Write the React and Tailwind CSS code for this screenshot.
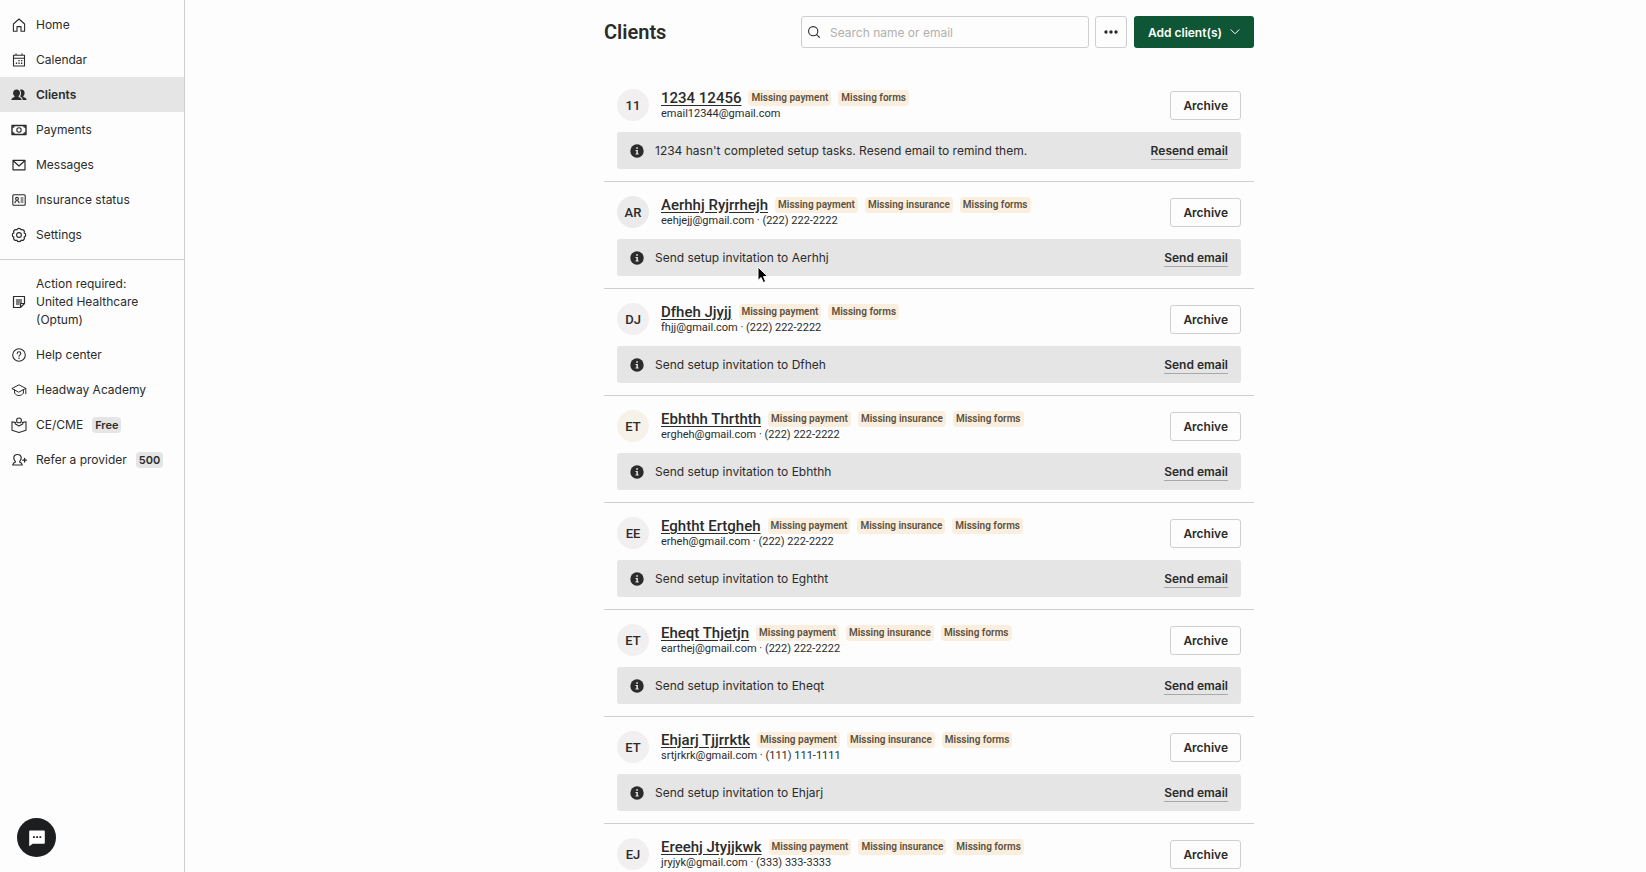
import React, { useState } from 'react';

const line = { fill: 'none', stroke: 'currentColor', strokeWidth: 1.1, strokeLinejoin: 'round', strokeLinecap: 'round' };

const icons = {
    home: <path {...line} d="M2.4 7 8 2l5.600 5v7.200H10V9.600H6v4.600H2.400z" />,
    calendar: (
        <>
            <path {...line} d="M2.500 3.200h11v10.800h-11zM2.500 6.200h11M5 1.800v1.400M11 1.800v1.400" />
            <path fill="currentColor" d="M7.400 8h1.300v1.300H7.400zM10 8h1.300v1.300H10zM4.800 10.600h1.300v1.300H4.800zM7.400 10.600h1.300v1.300H7.400zM10 10.600h1.300v1.300H10z" />
        </>
    ),
    clients: (
        <>
            <path fill="currentColor" d="M5.600 2.600c2 0 3.400 1.400 3.400 3.300 0 1.300-.6 2.500-1.400 3.200v.8c1.700.5 2.900 1.300 3.100 3.100H.3c.2-1.800 1.500-2.600 3.200-3.100v-.8C2.700 8.400 2.100 7.200 2.100 5.900c0-1.900 1.500-3.300 3.500-3.300z" />
            <path fill="currentColor" d="M9 2.900c.4-.2.900-.3 1.400-.3 1.900 0 3.200 1.400 3.200 3.300 0 1.300-.5 2.500-1.300 3.200v.8c1.900.5 3.200 1.300 3.400 3.100h-4c-.1-1.700-1-2.800-2.600-3.500.6-.8 1-2 1-3.400C10.100 4.900 9.700 3.800 9 2.900z" />
        </>
    ),
    payments: (
        <>
            <path {...line} strokeWidth="1.4" d="M1 3.500h14v9H1z" />
            <circle {...line} cx="8" cy="8" r="2.200" />
            <path fill="currentColor" opacity=".8" d="M1 3.500h3A3 3 0 0 1 1 6.300zM15 3.500h-3A3 3 0 0 0 15 6.300zM1 12.500h3A3 3 0 0 0 1 9.700zM15 12.500h-3A3 3 0 0 1 15 9.700z" />
        </>
    ),
    messages: <path {...line} strokeWidth="1.2" d="M2 3.400h12v9.400H2zM2.200 3.800 8 9l5.800-5.200" />,
    insurance: (
        <>
            <rect {...line} x="1.800" y="2.800" width="12.400" height="10.400" rx="1" />
            <circle {...line} cx="6" cy="6.800" r="1.400" />
            <path {...line} d="M4 10.800c0-1.300.7-2 2-2s2 .7 2 2M10 6h2M10 8h2M10 10h2" />
        </>
    ),
    settings: (
        <>
            <path {...line} strokeWidth="1.200" d="M13.200 5.850A2.300 2.300 0 0 1 13.200 10.150 2.300 2.300 0 0 1 10.150 13.200 2.300 2.300 0 0 1 5.850 13.200 2.300 2.300 0 0 1 2.800 10.150 2.300 2.300 0 0 1 2.800 5.850 2.300 2.300 0 0 1 5.850 2.800 2.300 2.300 0 0 1 10.150 2.800 2.300 2.300 0 0 1 13.200 5.850z" />
            <circle {...line} cx="8" cy="8" r="2.400" />
        </>
    ),
    note: (
        <>
            <path {...line} strokeWidth="1.2" d="M2.500 2.500h11V9.500l-4 4h-7zM13.500 9.500h-4v4" />
            <path fill="currentColor" opacity=".6" d="M5 5h6v4H8.600v2H5z" />
        </>
    ),
    help: (
        <>
            <circle {...line} cx="8" cy="8" r="6.300" />
            <path {...line} d="M6.200 6.600c0-1.100.8-1.800 1.800-1.800s1.800.7 1.800 1.700c0 1.300-1.800 1.400-1.800 2.800" />
            <circle cx="8" cy="11.200" r=".75" fill="currentColor" />
        </>
    ),
    academy: (
        <>
            <path {...line} strokeWidth="1" d="M1.200 6.400 8 2.800l6.800 3.600L8 10z" />
            <path {...line} strokeWidth="1" d="M3.600 7.800v3.400C4.600 12.700 6.200 13.500 8 13.500s3.400-.8 4.400-2.300V7.800M14.800 6.400v5.400" />
        </>
    ),
    reader: (
        <>
            <circle {...line} cx="8" cy="3.400" r="2.400" />
            <path {...line} d="M4.800 5.600 1 4.800v8.400l7 2.200 7-2.200V4.800l-3.800.8M4 6.800 8 9l4-2.200" />
        </>
    ),
    refer: (
        <>
            <path {...line} strokeWidth="1.200" d="M6.500 2.500c2.200 0 3.700 1.500 3.700 3.600 0 1.300-.6 2.500-1.500 3.300v.8c1.400.4 2.300 1.200 2.600 2.800H1.700c.3-1.600 1.200-2.400 2.600-2.800v-.8C3.400 8.600 2.800 7.400 2.800 6.100c0-2.100 1.500-3.600 3.700-3.600z" />
            <path {...line} strokeWidth="1.300" d="M11.800 8.200h3.600M13.600 6.400V10" />
        </>
    ),
};

function Icon({ name }) {
    return (
        <svg viewBox="0 0 16 16" className="size-4 shrink-0" aria-hidden="true">
            {icons[name]}
        </svg>
    );
}

const mainNav = [
    { icon: 'home', label: 'Home' },
    { icon: 'calendar', label: 'Calendar' },
    { icon: 'clients', label: 'Clients', active: true },
    { icon: 'payments', label: 'Payments' },
    { icon: 'messages', label: 'Messages' },
    { icon: 'insurance', label: 'Insurance status' },
    { icon: 'settings', label: 'Settings' },
];

const secondaryNav = [
    { icon: 'note', label: 'Action required: United Healthcare (Optum)' },
    { icon: 'help', label: 'Help center' },
    { icon: 'academy', label: 'Headway Academy' },
    { icon: 'reader', label: 'CE/CME', badge: 'Free' },
    { icon: 'refer', label: 'Refer a provider', badge: '500' },
];

const PAYMENT = 'Missing payment';
const INSURANCE = 'Missing insurance';
const FORMS = 'Missing forms';

const clients = [
    { initials: '11', name: '1234 12456', contact: 'email12344@gmail.com', tags: [PAYMENT, FORMS], note: "1234 hasn't completed setup tasks. Resend email to remind them.", action: 'Resend email' },
    { initials: 'AR', name: 'Aerhhj Ryjrrhejh', contact: 'eehjejj@gmail.com · (222) 222-2222', tags: [PAYMENT, INSURANCE, FORMS], note: 'Send setup invitation to Aerhhj', action: 'Send email', avatar: 'bg-[#ebebeb]' },
    { initials: 'DJ', name: 'Dfheh Jjyjj', contact: 'fhjj@gmail.com · (222) 222-2222', tags: [PAYMENT, FORMS], note: 'Send setup invitation to Dfheh', action: 'Send email' },
    { initials: 'ET', name: 'Ebhthh Thrthth', contact: 'ergheh@gmail.com · (222) 222-2222', tags: [PAYMENT, INSURANCE, FORMS], note: 'Send setup invitation to Ebhthh', action: 'Send email', avatar: 'bg-[#f6f2e9]' },
    { initials: 'EE', name: 'Eghtht Ertgheh', contact: 'erheh@gmail.com · (222) 222-2222', tags: [PAYMENT, INSURANCE, FORMS], note: 'Send setup invitation to Eghtht', action: 'Send email' },
    { initials: 'ET', name: 'Eheqt Thjetjn', contact: 'earthej@gmail.com · (222) 222-2222', tags: [PAYMENT, INSURANCE, FORMS], note: 'Send setup invitation to Eheqt', action: 'Send email' },
    { initials: 'ET', name: 'Ehjarj Tjjrrktk', contact: 'srtjrkrk@gmail.com · (111) 111-1111', tags: [PAYMENT, INSURANCE, FORMS], note: 'Send setup invitation to Ehjarj', action: 'Send email' },
    { initials: 'EJ', name: 'Ereehj Jtyjjkwk', contact: 'jryjyk@gmail.com · (333) 333-3333', tags: [PAYMENT, INSURANCE, FORMS] },
];

function NavItem({ item }) {
    return (
        <a
            href="#"
            aria-current={item.active ? 'page' : undefined}
            className={`flex min-h-[35px] items-center gap-[9px] py-2 pl-[11px] pr-4 leading-[18px] ${item.active ? 'bg-[#e5e5e5] font-semibold' : ''}`}
        >
            <Icon name={item.icon} />
            <span className="max-w-[116px]">{item.label}</span>
            {item.badge && (
                <span className="rounded-sm bg-[#e5e5e5] px-[3px] text-[11px] leading-4 font-semibold">{item.badge}</span>
            )}
        </a>
    );
}

function Sidebar() {
    return (
        <aside className="w-[185px] shrink-0 border-r border-[#cfcfcf]">
            <nav>
                <div className="border-b border-[#cfcfcf] py-[7px]">
                    {mainNav.map((item) => <NavItem key={item.label} item={item} />)}
                </div>
                <div className="pt-[7px]">
                    {secondaryNav.map((item) => <NavItem key={item.label} item={item} />)}
                </div>
            </nav>
        </aside>
    );
}

function ClientRow({ client }) {
    return (
        <li className="border-b border-[#cfcfcf] px-[13px] pt-[14px] pb-3">
            <div className="flex items-center">
                <span className={`flex size-8 shrink-0 items-center justify-center rounded-full text-[13px] font-[Roboto,sans-serif] font-medium ${client.avatar || 'bg-[#f1eff0]'}`}>
                    {client.initials}
                </span>
                <div className="ml-3 min-w-0 grow font-[Roboto,sans-serif]">
                    <div className="flex items-center gap-[7px]">
                        <a href="#" className="text-[15px] leading-[18px] font-medium underline underline-offset-2">{client.name}</a>
                        {client.tags.map((tag) => (
                            <span key={tag} className="rounded-sm bg-[#faefdf] px-[3px] text-[10px] leading-4 font-semibold text-[#5c5140]">{tag}</span>
                        ))}
                    </div>
                    <p className="text-[11px] leading-[14px]">{client.contact}</p>
                </div>
                <button type="button" className="h-[29px] shrink-0 rounded-[3px] border border-[#cfcfcf] px-3 font-semibold">
                    Archive
                </button>
            </div>
            {client.note && (
                <div className="mt-[11px] flex h-[37px] items-center rounded-[3px] bg-[#e5e5e5] px-[13px]">
                    <svg viewBox="0 0 14 14" className="size-[14px] shrink-0" aria-hidden="true">
                        <circle cx="7" cy="7" r="6.700" fill="#2b2b2b" />
                        <path fill="#e5e5e5" d="M6.200 3.200h1.700v1.500H6.200zM5.500 5.900h2.400v3.600h.8v1H5.500v-1h.9V6.900h-.9z" />
                    </svg>
                    <p className="ml-[11px] grow">{client.note}</p>
                    <button type="button" className="border-b border-[#a8a8a8] font-semibold">{client.action}</button>
                </div>
            )}
        </li>
    );
}

export default function App() {
    const [search, setSearch] = useState('');

    return (
        <div className="flex h-screen overflow-hidden bg-[#fdfdfd] font-[Inter,sans-serif] text-xs leading-[17px] text-[#2b2b2b]">
            <Sidebar />
            <main className="grow overflow-hidden pl-[27px]">
                <div className="mx-auto max-w-[650px]">
                    <header className="flex items-center pt-4">
                        <h1 className="grow font-[Roboto,sans-serif] text-xl font-semibold">Clients</h1>
                        <label className="flex h-8 w-[288px] items-center gap-[9px] rounded-[3px] border border-[#cfcfcf] px-[5px]">
                            <svg viewBox="0 0 14 14" className="size-[14px] shrink-0" aria-hidden="true">
                                <circle cx="6.200" cy="6.200" r="4.600" {...line} />
                                <path {...line} d="m9.600 9.600 2.800 2.800" />
                            </svg>
                            <input
                                type="search"
                                aria-label="Search name or email"
                                placeholder="Search name or email"
                                value={search}
                                onChange={(e) => setSearch(e.target.value)}
                                className="min-w-0 grow outline-none placeholder:text-[#b3b0ac]"
                            />
                        </label>
                        <button type="button" aria-label="More actions" className="ml-[6px] flex size-8 items-center justify-center rounded-[3px] border border-[#cfcfcf]">
                            <svg viewBox="0 0 14 4" className="h-1 w-[14px]" fill="currentColor" aria-hidden="true">
                                <circle cx="2" cy="2" r="1.700" />
                                <circle cx="7" cy="2" r="1.700" />
                                <circle cx="12" cy="2" r="1.700" />
                            </svg>
                        </button>
                        <button type="button" className="ml-[7px] flex h-8 items-center gap-2 rounded-[3px] bg-[#0f5636] px-[14px] font-semibold text-white">
                            Add client(s)
                            <svg viewBox="0 0 10 6" className="h-[6px] w-[10px]" aria-hidden="true">
                                <path {...line} strokeWidth="1" d="m1 .8 4 4 4-4" />
                            </svg>
                        </button>
                    </header>
                    <ul className="mt-[27px]">
                        {clients.map((client) => <ClientRow key={client.name} client={client} />)}
                    </ul>
                </div>
            </main>

            <button type="button" aria-label="Open chat" className="fixed bottom-[15px] left-[17px] flex size-[39px] items-center justify-center rounded-full bg-[#1c1e20]">
                <svg viewBox="0 0 18 18" className="size-[18px]" aria-hidden="true">
                    <path fill="#fff" d="M2.200 1.500h13.600c.6 0 1 .4 1 1v11.200c0 .6-.4 1-1 1H4.800L1.200 17.200V2.500c0-.6.4-1 1-1z" />
                    <path fill="#1c1e20" d="M5 7.300h1.800v1.600H5zM8.200 7.300H10v1.600H8.200zM11.400 7.300h1.800v1.600h-1.800z" />
                </svg>
            </button>

            {/* mouse pointer */}
            <svg viewBox="0 0 12 18" className="pointer-events-none fixed top-[266px] left-[757px] h-[18px] w-3" aria-hidden="true">
                <path fill="#000" stroke="#fff" strokeWidth="1" d="M1 1v13.400l3.100-2.900 2.200 5 2.300-1-2.100-4.900h4.300z" />
            </svg>
        </div>
    );
}
